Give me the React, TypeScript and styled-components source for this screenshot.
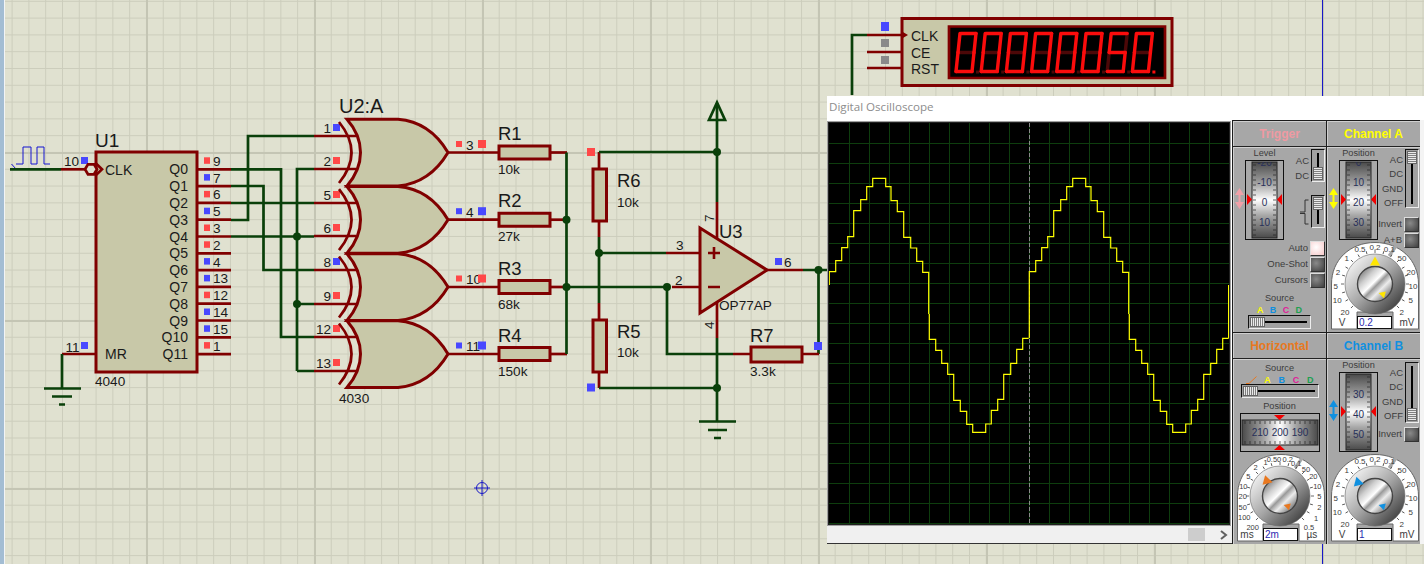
import React from 'react';
import styled, { createGlobalStyle } from 'styled-components';

const Global = createGlobalStyle`
  html, body { margin: 0; padding: 0; background: #e0e1d0; overflow: hidden; }
  body { font-family: "Liberation Sans", Arial, sans-serif; }
`;

const RED = '#800000';
const GREEN = '#0a400a';
const FILL = '#c8c8a8';

const Sheet = styled.main`
  position: relative;
  width: 1424px;
  height: 564px;
  overflow: hidden;
  background-color: #e0e1d0;
  background-image:
    linear-gradient(90deg, #c4c5b4 2px, transparent 2px),
    linear-gradient(#c4c5b4 2px, transparent 2px),
    linear-gradient(90deg, #cccdbc 1px, transparent 1px),
    linear-gradient(#cccdbc 1px, transparent 1px);
  background-size: 168px 168px, 168px 168px, 16.8px 16.8px, 16.8px 16.8px;
  background-position: 146px 0, 0 -16px, 11.6px 0, 0 0.8px;
  &::before {
    content: '';
    position: absolute;
    left: 0; top: 0; bottom: 0;
    width: 4px;
    background: #a3bdd3;
    border-right: 1px solid #f2f4f6;
  }
`;

const Schematic = styled.svg`
  display: block;
  position: absolute;
  left: 0; top: 0;
`;
const Wire = styled.path`
  fill: none;
  stroke: ${GREEN};
  stroke-width: 2.7;
`;
const Pin = styled.path`
  fill: none;
  stroke: ${RED};
  stroke-width: 2.7;
`;
const Part = styled.path`
  fill: ${FILL};
  stroke: ${RED};
  stroke-width: 3;
  stroke-linejoin: miter;
`;
const Dot = styled.circle`
  fill: ${GREEN};
`;
const Term = styled.rect<{ $k: 'r' | 'b' | 'g' }>`
  fill: ${p => (p.$k === 'r' ? '#ff4848' : p.$k === 'b' ? '#4848ff' : '#8a8a8a')};
`;
const Label = styled.text<{ $s?: number; $a?: string }>`
  font-family: "Liberation Sans", Arial, sans-serif;
  font-size: ${p => p.$s ?? 13.6}px;
  text-anchor: ${p => p.$a ?? 'start'};
  fill: #1a1a1a;
`;

const S = 16.8;
const qPins: [string, 'r' | 'b'][] = [
  ['9', 'r'], ['7', 'b'], ['6', 'r'], ['5', 'b'], ['3', 'r'], ['2', 'r'],
  ['4', 'b'], ['13', 'b'], ['12', 'r'], ['14', 'b'], ['15', 'b'], ['1', 'r'],
];
const gateIn: [string, number, 'r' | 'b'][] = [
  ['1', 136, 'b'], ['2', 169, 'r'], ['5', 203, 'r'], ['6', 236, 'r'],
  ['8', 270, 'b'], ['9', 304, 'r'], ['12', 337, 'r'], ['13', 371, 'r'],
];
const gateOut: [string, number, 'r' | 'b', string, string][] = [
  ['3', 152.5, 'r', 'R1', '10k'],
  ['4', 219.7, 'b', 'R2', '27k'],
  ['10', 287, 'r', 'R3', '68k'],
  ['11', 354, 'b', 'R4', '150k'],
];

const U1: React.FC = () => (
  <g>
    <path d="M11.5 164 L16 169 M16 164 H23 V147 H31 V164 H37 V147 H44 V164 H50" fill="none" stroke="#1414d0" strokeWidth="1" />
    <Wire d="M10 169.3H61" />
    <Pin d="M61 169.3H85" />
    <Label x={64} y={166}>10</Label>
    <Term $k="b" x={81} y={157} width={7} height={7} />
    <Part d="M96 152H197V372H96Z" />
    <path d="M85 169.3 l3 -5 h6 l3 5 l-3 5 h-6 Z" fill="#e0e1d0" stroke={RED} strokeWidth="2.7" />
    <path d="M96 163.5 l6 5.8 l-6 5.8" fill="none" stroke={RED} strokeWidth="2.7" />
    <Label x={95} y={147} $s={19}>U1</Label>
    <Label x={105} y={175} $s={14}>CLK</Label>
    <Label x={105} y={359} $s={14}>MR</Label>
    <Label x={95} y={386}>4040</Label>
    {qPins.map(([n, k], i) => {
      const y = 169.3 + i * S;
      return (
        <g key={i}>
          <Pin d={`M197 ${y}H231`} />
          <Label x={188} y={y + 5} $s={14} $a="end">{`Q${i}`}</Label>
          <Label x={213} y={y - 3.5}>{n}</Label>
          <Term $k={k} x={204} y={y - 12} width={6} height={6.5} />
        </g>
      );
    })}
    <Pin d="M62 354H96" />
    <Label x={65.5} y={352}>11</Label>
    <Term $k="b" x={81} y={342} width={7} height={7} />
    <Wire d="M62 354V388" />
    <path d="M44 388.5H81M52 396.5H72M59 404.5H65" stroke={GREEN} strokeWidth="2.7" fill="none" />
  </g>
);

const Gate: React.FC<{ y: number }> = ({ y }) => (
  <g transform={`translate(0 ${y - 152.5})`}>
    <path d="M339 122 Q364 152.5 339 183" fill="none" stroke={RED} strokeWidth="2.7" />
    <Part d="M347 119.3 H398 C420 121 437 134 448 152.5 C437 171 420 184 398 186 H347 C365 165 365 140 347 119.3 Z" />
  </g>
);

const Logic: React.FC = () => (
  <g>
    <Wire d="M231 169.3H281V337H314M231 186H263.500V270H314M231 203H314M231 220H248V136H314M231 236.500H314M297 371H314M297 371V169H314M297 304H314" />
    <Dot cx={297} cy={236.5} r={4} />
    <Dot cx={297} cy={304} r={4} />
    {gateIn.map(([n, y, k]) => (
      <g key={n}>
        <Pin d={`M314 ${y}H356`} />
        <Label x={331} y={y - 3.5} $a="end">{n}</Label>
        <Term $k={k} x={333} y={y - 12} width={7} height={7} />
      </g>
    ))}
    {[152.5, 219.7, 287, 354].map(y => <Gate key={y} y={y} />)}
    <Label x={339} y={113} $s={20}>U2:A</Label>
    <Label x={339} y={403}>4030</Label>
    {gateOut.map(([n, y, k, name, val]) => (
      <g key={n}>
        <Pin d={`M448 ${y}H499`} />
        <Pin d={`M550 ${y}H567`} />
        <Part d={`M499 ${y - 6.5}H550V${y + 6.500}H499Z`} />
        <Term $k={k} x={456} y={y - 11.5} width={6} height={6} />
        <Label x={466} y={y - 3}>{n}</Label>
        <Term $k={k} x={478} y={y - 12.5} width={8} height={8} />
        <Label x={498} y={y - 12.5} $s={18.5}>{name}</Label>
        <Label x={498} y={y + 21.5}>{val}</Label>
      </g>
    ))}
    <Wire d="M566.5 152.5V354M566.5 287H667" />
    <Dot cx={566.500} cy={219.700} r={4} />
    <Dot cx={566.500} cy={287} r={4} />
  </g>
);

const Amp: React.FC = () => (
  <g>
    <Term $k="r" x={587} y={148} width={8} height={8} />
    <Term $k="b" x={587} y={383.5} width={8} height={8} />
    <Pin d="M599 152V169M599 221V237M599 303V320M599 372V388" />
    <Wire d="M599 152H717M599 237V303M599 253H666M599 388H717" />
    <Part d="M593 169H606.500V221H593Z" />
    <Part d="M593 320H606.500V372H593Z" />
    <Label x={617} y={187} $s={18.5}>R6</Label>
    <Label x={617} y={207}>10k</Label>
    <Label x={617} y={338} $s={18.5}>R5</Label>
    <Label x={617} y={357}>10k</Label>
    <Wire d="M717 104V202M717 338V421M667 287V354H733M803 270H827M818.500 270V354" />
    <Dot cx={599} cy={253} r={4} />
    <Dot cx={717} cy={152} r={4} />
    <Dot cx={717} cy={388} r={4} />
    <Dot cx={667} cy={287} r={4} />
    <Dot cx={818.500} cy={270} r={4} />
    <path d="M717 102.500 L709 120 H725 Z M708 120 H726" fill="none" stroke={GREEN} strokeWidth="2.7" />
    <Pin d="M717 202V238M717 303V338M666 253H700M672 287H700M767 270H803M733 354H751M802 354H819" />
    <Part d="M700 228 L767 270 L700 313 Z" />
    <path d="M708 253H720M714 247V259M708 287H720" stroke={RED} strokeWidth="2.6" fill="none" />
    <Part d="M751 347H802V362H751Z" />
    <Term $k="b" x={814} y={342} width={8} height={8} />
    <Term $k="b" x={775} y={258} width={7} height={7} />
    <Label x={784} y={267}>6</Label>
    <Label x={676} y={250}>3</Label>
    <Label x={675} y={285}>2</Label>
    <Label x={0} y={0} transform="translate(714 222) rotate(-90)">7</Label>
    <Label x={0} y={0} transform="translate(714 329) rotate(-90)">4</Label>
    <Label x={719} y={238} $s={18.500}>U3</Label>
    <Label x={719} y={310}>OP77AP</Label>
    <Label x={750} y={376}>3.3k</Label>
    <Label x={750} y={342} $s={18.5}>R7</Label>
    <path d="M699 421.500H736M708 430H727M714 438H721" stroke={GREEN} strokeWidth="2.7" fill="none" />
  </g>
);

const segs: Record<string, number[][]> = {
  a: [1, 0, 16, 0], b: [16, 0, 16, 19], c: [16, 19, 16, 38], d: [0, 38, 16, 38],
  e: [0, 19, 0, 38], f: [0, 0, 0, 19], g: [0, 19, 16, 19],
};
const lit: Record<string, string> = { '0': 'abcdef', '5': 'acdfg' };
const order = ['g', 'e', 'b', 'f', 'c', 'a', 'd'];

const Digit: React.FC<{ ch: string; x: number; point?: boolean }> = ({ ch, x, point }) => {
  const sk = (px: number, py: number) => `${x + px + (38 - py) * 0.105},${33.5 + py}`;
  const on = lit[ch];
  const sorted = [...order.filter(k => !on.includes(k)), ...order.filter(k => on.includes(k))];
  return (
    <g>
      {sorted.map(k => {
        const [a, b, c, d] = segs[k];
        return <polyline key={k} points={`${sk(a, b)} ${sk(c, d)}`} stroke={on.includes(k) ? '#fb0c0c' : '#4c0808'} strokeWidth="3.4" strokeLinecap="round" fill="none" />;
      })}
      <rect x={x + 20} y={70.5} width={3} height={3} fill={point ? '#fb0c0c' : '#4c0808'} />
    </g>
  );
};

const Counter: React.FC = () => (
  <g>
    <Wire d="M852 95V35H867" />
    <Pin d="M867 35H901M867 52H901M867 68H901" />
    <Term $k="b" x={881} y={22} width={8} height={9} />
    <Term $k="g" x={881} y={39} width={8} height={8} />
    <Term $k="g" x={881} y={56} width={8} height={8} />
    <Part d="M902 18.500H1172V85.500H902Z" />
    <path d="M902 31.500 L908 35 L902 38.500 Z" fill={RED} />
    <Label x={911} y={40.5} $s={14}>CLK</Label>
    <Label x={911} y={58} $s={14}>CE</Label>
    <Label x={911} y={74} $s={14}>RST</Label>
    <path d="M949 26.500H1165V78H949Z" fill="#000" stroke={RED} strokeWidth="2.7" />
    {'00000050'.split('').map((c, i) => <Digit key={i} ch={c} x={956 + i * 25.2} point={i === 7} />)}
  </g>
);

const Target: React.FC = () => (
  <g stroke="#1a1ac8" strokeWidth="1" fill="none">
    <circle cx={482} cy={488} r={5.5} />
    <path d="M474 488H490M482 480V496" />
  </g>
);

/* ---------- oscilloscope ---------- */
const Scope = styled.section`
  position: absolute;
  left: 827px;
  top: 96px;
  width: 597px;
  height: 448px;
  background: #fff;
  display: flex;
  flex-direction: column;
`;
const TitleBar = styled.header`
  height: 24px;
  flex: none;
  padding-left: 2px;
  font: 11.6px/21px "Open Sans", "Noto Sans", sans-serif;
  color: #8d8d8d;
  background: #fff;
`;
const ScopeMain = styled.div`
  flex: 1;
  display: flex;
  min-height: 0;
`;
const ScreenCol = styled.div`
  width: 405px;
  flex: none;
  display: flex;
  flex-direction: column;
  padding-top: 2px;
  background: #fff;
  border-bottom: 1px solid #333;
  box-sizing: border-box;
`;
const Screen = styled.svg`
  display: block;
  margin-left: 1px;
  border: 1px solid #202020;
  background: #000;
  outline: 1px solid #a0a0a0;
`;
const HScroll = styled.div`
  flex: 1;
  display: flex;
  align-items: center;
  justify-content: flex-end;
  padding-right: 4px;
  gap: 15px;
  margin-top: 1px;
  background: #f0f0f0;
`;
const ScrollThumb = styled.div`
  width: 17px;
  height: 13px;
  background: #cdcdcd;
`;
const Chevron = styled.svg`
  display: block;
`;

const Controls = styled.div`
  flex: 1;
  display: grid;
  grid-template-columns: 94px 94px;
  grid-template-rows: 212px 212px;
  background: #f4f4f4;
`;
const Cell = styled.div`
  background: #a7a7a7;
  border-left: 1px solid #1c1c1c;
  border-top: 1px solid #1c1c1c;
  box-shadow: inset 1px 1px 0 #cfcfcf;
  display: flex;
  flex-direction: column;
  min-width: 0;
  overflow: hidden;
`;
const CellHead = styled.h3<{ $c: string }>`
  margin: 0;
  height: 26px;
  flex: none;
  box-sizing: border-box;
  border-bottom: 1px solid #222;
  font: bold 12px/26px "Liberation Sans", Arial, sans-serif;
  text-align: center;
  color: ${p => p.$c};
`;
const CellBody = styled.div`
  flex: 1;
  display: flex;
  flex-direction: column;
  min-height: 0;
  box-shadow: inset 0 1px 0 #d0d0d0;
`;
const TopRow = styled.div<{ $h: number }>`
  height: ${p => p.$h}px;
  flex: none;
  display: flex;
`;
const ArrowSlot = styled.div<{ $w: number }>`
  width: ${p => p.$w}px;
  flex: none;
  display: flex;
  justify-content: center;
  padding-top: 41px;
`;
const WheelStack = styled.div`
  width: 39px;
  flex: none;
  display: flex;
  flex-direction: column;
  align-items: center;
`;
const Cap = styled.span<{ $mt?: number }>`
  display: block;
  margin-top: ${p => p.$mt ?? 0}px;
  font: 9.2px/13px "Liberation Sans", Arial, sans-serif;
  color: #3c3c3c;
  white-space: nowrap;
`;
const Side = styled.div<{ $top: number }>`
  flex: 1;
  min-width: 0;
  display: flex;
  flex-direction: column;
  padding: ${p => p.$top}px 1px 0 0;
`;
const SwitchRow = styled.div<{ $gap?: number }>`
  display: flex;
  justify-content: flex-end;
  gap: 2px;
  margin-bottom: ${p => p.$gap ?? 0}px;
`;
const SwitchLabels = styled.div<{ $step: number }>`
  display: flex;
  flex-direction: column;
  align-items: flex-end;
  padding-top: 4px;
  font: 9.5px/${p => p.$step}px "Liberation Sans", Arial, sans-serif;
  color: #3c3c3c;
`;
const VSwitch = styled.div<{ $h: number; $pos: 'top' | 'bottom' }>`
  position: relative;
  width: 14px;
  height: ${p => p.$h}px;
  box-sizing: border-box;
  border: 1px solid #111;
  border-right-color: #eee;
  border-bottom-color: #eee;
  background: #a0a0a0;
  &::before {
    content: '';
    position: absolute;
    left: 5px; top: 3px; bottom: 3px;
    width: 2px;
    background: #000;
  }
  &::after {
    content: '';
    position: absolute;
    left: 1px;
    ${p => p.$pos}: 1px;
    width: 10px;
    height: 13px;
    border: 1px solid #666;
    box-sizing: border-box;
    background: repeating-linear-gradient(#eaeaea 0 1px, #808080 1px 2px);
  }
`;
const HSlider = styled.div<{ $w: number }>`
  position: relative;
  width: ${p => p.$w}px;
  height: 14px;
  flex: none;
  box-sizing: border-box;
  border: 1px solid #111;
  border-right-color: #eee;
  border-bottom-color: #eee;
  background: #a0a0a0;
  &::before {
    content: '';
    position: absolute;
    left: 3px; right: 3px; top: 5px;
    height: 2px;
    background: #000;
  }
  &::after {
    content: '';
    position: absolute;
    left: 1px; top: 1px;
    width: 15px;
    height: 10px;
    border: 1px solid #666;
    box-sizing: border-box;
    background: repeating-linear-gradient(90deg, #eaeaea 0 1px, #808080 1px 2px);
  }
`;
const BtnRow = styled.div`
  display: flex;
  justify-content: flex-end;
  align-items: center;
  gap: 2px;
  height: 16px;
  font: 9.5px/16px "Liberation Sans", Arial, sans-serif;
  color: #3c3c3c;
  white-space: nowrap;
`;
const PushBtn = styled.div<{ $lit?: boolean }>`
  width: 15px;
  height: 15px;
  box-sizing: border-box;
  border: 1px solid #333;
  border-top-color: #ddd;
  border-left-color: #ddd;
  background: ${p => (p.$lit
    ? 'radial-gradient(circle at 40% 40%, #fff, #f7c8c8)'
    : 'radial-gradient(circle at 40% 40%, #8a8a8a, #3e3e3e)')};
`;
const TriggerButtons = styled.div`
  display: flex;
  flex-direction: column;
  padding: 0 1px 0 0;
`;
const EdgeRow = styled.div`
  display: flex;
  justify-content: flex-end;
  align-items: center;
  gap: 2px;
`;
const SourceGroup = styled.div<{ $w: number; $ml?: number }>`
  width: ${p => p.$w}px;
  margin: 4px 0 0 ${p => p.$ml ?? 0}px;
  display: flex;
  flex-direction: column;
  align-items: center;
`;
const SourceLetters = styled.div<{ $pad: number; $w?: number; $h: number }>`
  align-self: ${p => (p.$w ? 'center' : 'stretch')};
  ${p => (p.$w ? `width: ${p.$w}px;` : '')}
  display: flex;
  justify-content: space-between;
  align-items: center;
  height: ${p => p.$h}px;
  flex: none;
  padding: 0 ${p => p.$pad}px;
  box-sizing: border-box;
`;
const Letter = styled.span<{ $c: string }>`
  font: bold 9px/10px "Liberation Sans", Arial, sans-serif;
  color: ${p => p.$c};
`;
const HorizontalBody = styled(CellBody)`
  align-items: center;
  padding-top: 3px;
`;
const HWheelSpacer = styled.div`
  flex: none;
  margin-bottom: 2px;
  height: 39px;
`;
const DialWrap = styled.div`
  position: relative;
  width: 90px;
  height: 88px;
  flex: none;
  align-self: flex-start;
  margin-left: 3px;
`;
const DialInput = styled.div`
  position: absolute;
  left: 27px;
  top: 74px;
  width: 35px;
  height: 13px;
  box-sizing: border-box;
  border: 1px solid #111;
  background: #fff;
  padding-left: 1px;
  font: 10px/12px "Liberation Sans", Arial, sans-serif;
  color: #2a2ab0;
`;
const PlainSvg = styled.svg`
  display: block;
`;
const DialText = styled.text<{ $s?: number }>`
  font-family: "Liberation Sans", Arial, sans-serif;
  font-size: ${p => p.$s ?? 8}px;
  text-anchor: middle;
  fill: #3c3c3c;
`;
const WheelText = styled.text`
  font-family: "Liberation Sans", Arial, sans-serif;
  font-size: 10px;
  text-anchor: middle;
  fill: #28305a;
`;

const Wheel: React.FC<{ id: string; vals: string[]; cut?: string }> = ({ id, vals, cut }) => (
  <PlainSvg width="39" height="80" viewBox="0 0 39 80">
    <defs>
      <linearGradient id={id} x1="0" y1="0" x2="0" y2="1">
        <stop offset="0" stopColor="#4a4a4a" />
        <stop offset="0.3" stopColor="#a8a8a8" />
        <stop offset="0.5" stopColor="#fff" />
        <stop offset="0.7" stopColor="#a8a8a8" />
        <stop offset="1" stopColor="#4a4a4a" />
      </linearGradient>
      <clipPath id={`${id}clip`}>
        <rect x="7" y="2" width="25" height="76" />
      </clipPath>
    </defs>
    <rect x="0.5" y="0.5" width="38" height="79" fill="#a8a8a8" stroke="#111" />
    <rect x="7" y="2" width="25" height="76" fill={`url(#${id})`} stroke="#222" />
    {Array.from({ length: 15 }, (_, i) => 5 + i * 5).map(y => (
      <path key={y} d={`M8 ${y}H11M28 ${y}H31`} stroke="#222" strokeWidth="0.7" />
    ))}
    {cut && <WheelText x={19.5} y={6} clipPath={`url(#${id}clip)`}>{cut}</WheelText>}
    {vals.map((v, i) => <WheelText key={v} x={19.5} y={26 + i * 20}>{v}</WheelText>)}
    <path d="M2 34 L7 39.500 L2 45 Z M37 34 L32 39.500 L37 45 Z" fill="#f00000" />
  </PlainSvg>
);

const HWheel: React.FC = () => (
  <PlainSvg width="80" height="39" viewBox="0 0 80 39">
    <defs>
      <linearGradient id="hw" x1="0" y1="0" x2="1" y2="0">
        <stop offset="0" stopColor="#4a4a4a" />
        <stop offset="0.3" stopColor="#a8a8a8" />
        <stop offset="0.5" stopColor="#fff" />
        <stop offset="0.7" stopColor="#a8a8a8" />
        <stop offset="1" stopColor="#4a4a4a" />
      </linearGradient>
    </defs>
    <rect x="0.5" y="0.5" width="79" height="38" fill="#a8a8a8" stroke="#111" />
    <rect x="2" y="7" width="76" height="25" fill="url(#hw)" stroke="#222" />
    {Array.from({ length: 15 }, (_, i) => 5 + i * 5).map(x => (
      <path key={x} d={`M${x} 8V11M${x} 28V31`} stroke="#222" strokeWidth="0.7" />
    ))}
    {['210', '200', '190'].map((v, i) => <WheelText key={v} x={20 + i * 20} y={23}>{v}</WheelText>)}
    <path d="M34 2 L39.500 7 L45 2 Z M34 37 L39.500 32 L45 37 Z" fill="#f00000" />
  </PlainSvg>
);

const DoubleArrow: React.FC<{ c: string }> = ({ c }) => (
  <PlainSvg width="9" height="21" viewBox="0 0 9 21">
    <path d="M4.500 0 L9 7 H5.500 V14 H9 L4.500 21 L0 14 H3.500 V7 H0 Z" fill={c} />
  </PlainSvg>
);

const chLabels: [string, number, number][] = [
  ['20', 15, 73], ['10', 7.3, 61], ['5', 5.7, 47], ['2', 8, 33], ['1', 16.7, 19],
  ['0.5', 30, 10], ['0.2', 45, 8], ['0.1', 59.3, 10], ['50', 72, 19], ['20', 81, 33],
  ['10', 83, 47], ['5', 80.7, 61], ['2', 71.7, 73],
];
const hLabels: [string, number, number][] = [
  ['200', 16.7, 75.7], ['100', 8.3, 66], ['50', 6.7, 56], ['20', 6.7, 44.700], ['10', 7.3, 34.700],
  ['5', 12.3, 24.700], ['2', 19.7, 16.300], ['1', 29.7, 10.700], ['0.50', 38, 8], ['0.2', 51.7, 8],
  ['0.1', 60.3, 12], ['50', 70, 18], ['20', 77.3, 24.700], ['10', 81.3, 34.700], ['5', 83.3, 44.700],
  ['2', 83.3, 55.700], ['1', 80, 67.300], ['0.5', 73, 75.700],
];

const Dial: React.FC<{
  id: string; labels: [string, number, number][]; c: string; big: [number, number, number];
  left: string; right: string; value: string; cx: number; small?: number;
}> = ({ id, labels, c, big, left, right, value, cx, small }) => {
  const cy = 42;
  const ticks = Array.from({ length: 19 }, (_, i) => -135 + i * 15);
  return (
    <DialWrap>
      <PlainSvg width="90" height="88" viewBox="0 0 90 88">
        <defs>
          <linearGradient id={`${id}k`} x1="0.1" y1="0.1" x2="0.9" y2="0.9">
            <stop offset="0" stopColor="#f6f6f6" />
            <stop offset="0.5" stopColor="#a6a6a6" />
            <stop offset="1" stopColor="#3c3c3c" />
          </linearGradient>
          <linearGradient id={`${id}c`} x1="0.1" y1="0.1" x2="0.9" y2="0.9">
            <stop offset="0" stopColor="#777" />
            <stop offset="0.25" stopColor="#cfcfcf" />
            <stop offset="0.45" stopColor="#fff" />
            <stop offset="0.55" stopColor="#999" />
            <stop offset="0.7" stopColor="#ececec" />
            <stop offset="1" stopColor="#666" />
          </linearGradient>
        </defs>
        <path d="M1.500 87 V42 C1.500 18 20 0.500 45 0.500 C70 0.500 88.500 18 88.500 42 V87 H63 V70 H27 V87 Z" fill="#fff" stroke="#666" strokeWidth="1" />
        <path d="M59 14 L67 3" stroke="#a7a7a7" strokeWidth="3" />
        {ticks.map(a => (
          <line key={a} x1={cx} y1={cy - 31} x2={cx} y2={cy - 34} stroke="#444" strokeWidth="0.8" transform={`rotate(${a} ${cx} ${cy})`} />
        ))}
        {labels.map(([t, x, y], i) => <DialText key={i} x={x} y={y} $s={labels.length > 13 ? 7.5 : 8}>{t}</DialText>)}
        <DialText x={left === 'V' ? 12 : 11} y={84} $s={10}>{left}</DialText>
        <DialText x={right === 'mV' ? 77 : 76} y={84} $s={10}>{right}</DialText>
        <circle cx={cx} cy={cy} r={30} fill={`url(#${id}k)`} stroke="#666" strokeWidth="0.6" />
        <circle cx={cx} cy={cy} r={17.500} fill={`url(#${id}c)`} stroke="#444" strokeWidth="1.4" />
        <path d="M0 -5 L5 4 H-5 Z" fill={c} transform={`translate(${big[0]} ${big[1]}) rotate(${big[2]})`} />
        <path d="M0 -3.500 L3.500 3 H-3.500 Z" fill={c} transform={`translate(${cx + (small ?? 7)} 52) rotate(-75)`} />
      </PlainSvg>
      <DialInput>{value}</DialInput>
    </DialWrap>
  );
};

const period: [number, number][] = [
  [6.4, 271.7], [12.4, 260.7], [18.4, 247.7], [24.4, 236.7], [31.4, 210.7], [37.4, 199.7], [43.4, 186.7], [56.4, 178.3],
  [61.700, 186.7], [68, 200.7], [74.4, 211.7], [81.4, 237.3], [87.4, 248], [93.4, 261.3], [99.4, 272.3],
];
const periodLow: [number, number][] = [
  [106.4, 339.3], [112.4, 350.3], [118.4, 363.3], [124.4, 374.3], [131, 400.3], [137.4, 411.3], [143.4, 424.3], [156.4, 432.3],
  [162, 424], [168.4, 410.3], [174.4, 399.3], [181.4, 374.3], [187.4, 363.3], [193.4, 349.3], [199.4, 338.3],
];
const TOP = 123;
const traceUp = (ox: number, start: number) => {
  let d = `M${ox} ${start - TOP}`;
  for (const [x, y] of period) {
    d += `V${y - TOP}H${ox + x}`;
  }
  return d + `V${314 - TOP}`;
};
const traceDown = (ox: number) => {
  let d = `M${ox + 100} ${314 - TOP}`;
  for (const [x, y] of periodLow) {
    d += `V${y - TOP}H${ox + x}`;
  }
  return d;
};
const Trace = styled.path`
  fill: none;
  stroke: #ffff00;
  stroke-width: 1.2;
`;

export default function App() {
  const grid = Array.from({ length: 20 }, (_, i) => 20.5 + i * 20);
  return (
    <Sheet>
      <Global />
      <Schematic width="1424" height="564" viewBox="0 0 1424 564">
        <path d="M1322.500 0V564" stroke="#1818c8" strokeWidth="1" />
        <U1 />
        <Logic />
        <Amp />
        <Counter />
        <Target />
      </Schematic>
      <Scope>
        <TitleBar>Digital Oscilloscope</TitleBar>
        <ScopeMain>
          <ScreenCol>
            <Screen width="400" height="401" viewBox="0 0 400 401">
              {grid.map(p => (
                <g key={p} stroke="#0e3d0e" strokeWidth="1">
                  <line x1={p} y1={0} x2={p} y2={401} />
                  <line x1={0} y1={p} x2={400} y2={p} />
                </g>
              ))}
              <line x1={200.5} y1={0} x2={200.5} y2={401} stroke="#8a8a8a" strokeDasharray="4 2" />
              <Trace d={traceUp(0.3, 285)} />
              <Trace d={traceDown(0.3)} />
              <Trace d={traceUp(200.3, 338)} />
              <Trace d={traceDown(200.3)} />
              <Trace d={`M399.600 ${338 - TOP}V${285 - TOP}`} />
            </Screen>
            <HScroll>
              <ScrollThumb />
              <Chevron width="8" height="10" viewBox="0 0 8 10">
                <path d="M1 1 L6 5 L1 9" fill="none" stroke="#606060" strokeWidth="2" />
              </Chevron>
            </HScroll>
          </ScreenCol>
          <Controls>
            <Cell>
              <CellHead $c="#ee9aa2">Trigger</CellHead>
              <CellBody>
                <TopRow $h={93}>
                  <ArrowSlot $w={12}><DoubleArrow c="#f0a0a8" /></ArrowSlot>
                  <WheelStack>
                    <Cap>Level</Cap>
                    <Wheel id="wt" vals={['-10', '0', '10']} cut="-20" />
                  </WheelStack>
                  <Side $top={2}>
                    <SwitchRow $gap={12}>
                      <SwitchLabels $step={15}><span>AC</span><span>DC</span></SwitchLabels>
                      <VSwitch $h={33} $pos="bottom" />
                    </SwitchRow>
                    <EdgeRow>
                      <PlainSvg width="9" height="26" viewBox="0 0 9 26">
                        <path d="M8.500 1H5V13H0M0 14.500H5V25H8.500" fill="none" stroke="#333" strokeWidth="1" />
                      </PlainSvg>
                      <VSwitch $h={33} $pos="top" />
                    </EdgeRow>
                  </Side>
                </TopRow>
                <TriggerButtons>
                  <BtnRow>Auto<PushBtn $lit /></BtnRow>
                  <BtnRow>One-Shot<PushBtn /></BtnRow>
                  <BtnRow>Cursors<PushBtn /></BtnRow>
                </TriggerButtons>
                <SourceGroup $w={63} $ml={15}>
                  <Cap>Source</Cap>
                  <SourceLetters $pad={9} $h={10}>
                    <Letter $c="#ffff00">A</Letter>
                    <Letter $c="#1090e0">B</Letter>
                    <Letter $c="#e0209a">C</Letter>
                    <Letter $c="#20a050">D</Letter>
                  </SourceLetters>
                  <HSlider $w={63} />
                </SourceGroup>
              </CellBody>
            </Cell>
            <Cell>
              <CellHead $c="#ffff00">Channel A</CellHead>
              <CellBody>
                <TopRow $h={95}>
                  <ArrowSlot $w={12}><DoubleArrow c="#ffff00" /></ArrowSlot>
                  <WheelStack>
                    <Cap>Position</Cap>
                    <Wheel id="wa" vals={['10', '20', '30']} cut="0" />
                  </WheelStack>
                  <Side $top={2}>
                    <SwitchRow $gap={6}>
                      <SwitchLabels $step={14.300}><span>AC</span><span>DC</span><span>GND</span><span>OFF</span></SwitchLabels>
                      <VSwitch $h={59} $pos="top" />
                    </SwitchRow>
                    <BtnRow>Invert<PushBtn /></BtnRow>
                    <BtnRow>A+B<PushBtn /></BtnRow>
                  </Side>
                </TopRow>
                <Dial id="da" labels={chLabels} c="#ffe600" big={[45, 19.5, 0]} left="V" right="mV" value="0.2" cx={45} />
              </CellBody>
            </Cell>
            <Cell>
              <CellHead $c="#e87820">Horizontal</CellHead>
              <HorizontalBody>
                <Cap>Source</Cap>
                <SourceLetters $pad={5} $w={78} $h={9}>
                  <PlainSvg width="11" height="8" viewBox="0 0 11 8">
                    <path d="M0 7.500H3L10.500 0.500" fill="none" stroke="#e87820" strokeWidth="1" />
                  </PlainSvg>
                  <Letter $c="#ffff00">A</Letter>
                  <Letter $c="#1090e0">B</Letter>
                  <Letter $c="#e0209a">C</Letter>
                  <Letter $c="#20a050">D</Letter>
                </SourceLetters>
                <HSlider $w={78} />
                <Cap $mt={2}>Position</Cap>
                <HWheelSpacer><HWheel /></HWheelSpacer>
                <Dial id="dh" labels={hLabels} c="#e87820" big={[31.7, 27, 105]} left="ms" right="µs" value="2m" cx={44} />
              </HorizontalBody>
            </Cell>
            <Cell>
              <CellHead $c="#1090e0">Channel B</CellHead>
              <CellBody>
                <TopRow $h={95}>
                  <ArrowSlot $w={12}><DoubleArrow c="#1090e0" /></ArrowSlot>
                  <WheelStack>
                    <Cap>Position</Cap>
                    <Wheel id="wb" vals={['30', '40', '50']} />
                  </WheelStack>
                  <Side $top={3}>
                    <SwitchRow $gap={3}>
                      <SwitchLabels $step={14.300}><span>AC</span><span>DC</span><span>GND</span><span>OFF</span></SwitchLabels>
                      <VSwitch $h={61} $pos="bottom" />
                    </SwitchRow>
                    <BtnRow>Invert<PushBtn /></BtnRow>
                  </Side>
                </TopRow>
                <Dial id="db" labels={chLabels} c="#1090e0" big={[29, 28.7, 105]} left="V" right="mV" value="1" cx={45} />
              </CellBody>
            </Cell>
          </Controls>
        </ScopeMain>
      </Scope>
    </Sheet>
  );
}
